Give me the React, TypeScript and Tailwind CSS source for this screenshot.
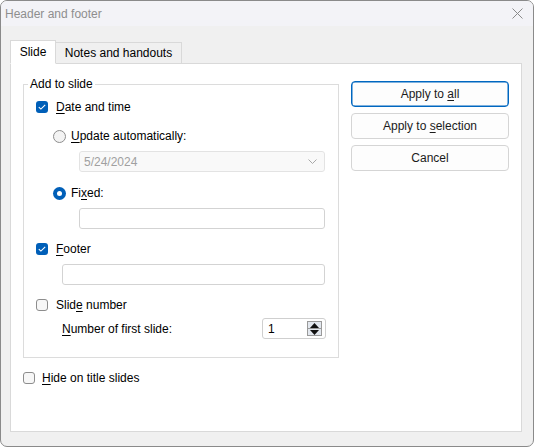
import React from "react";

const font = { fontFamily: '"Segoe UI", "Liberation Sans", Arial, sans-serif' };

function Check({ checked }: { checked?: boolean }) {
  if (checked) {
    return (
      <span className="flex h-[12px] w-[12px] shrink-0 items-center justify-center rounded-[3px] bg-[#005fb8]">
        <svg width="8" height="6" viewBox="0 0 8 6" fill="none">
          <path d="M0.8 3.1 L2.9 5.1 L7.2 0.9" stroke="white" strokeWidth="1.1" />
        </svg>
      </span>
    );
  }
  return <span className="block h-[12px] w-[12px] shrink-0 rounded-[3px] border border-[#8d8d8d] bg-[#f7f7f7]" />;
}

function Radio({ checked }: { checked?: boolean }) {
  if (checked) {
    return (
      <span className="flex h-[13px] w-[13px] shrink-0 items-center justify-center rounded-full bg-[#005fb8]">
        <span className="block h-[5px] w-[5px] rounded-full bg-white" />
      </span>
    );
  }
  return <span className="block h-[13px] w-[13px] shrink-0 rounded-full border border-[#8d8d8d] bg-[#f3f3f3]" />;
}

function Btn({ children, primary }: { children: React.ReactNode; primary?: boolean }) {
  return (
    <div
      className={
        "flex h-[26px] w-[158px] items-center justify-center rounded-[4px] bg-[#fdfdfd] text-[12px] text-[#1b1b1b] " +
        (primary ? "border border-[#0067c0] shadow-[inset_0_0_0_0.5px_#0067c0]" : "border border-[#d5d5d5]")
      }
    >
      {children}
    </div>
  );
}

export default function App() {
  return (
    <div
      style={font}
      className="flex h-[447px] w-[534px] flex-col overflow-hidden rounded-[7px] border border-[#8a8a8a] bg-[#f0f0f0] text-[12px] text-black"
    >
      {/* title bar */}
      <div className="flex h-[25px] shrink-0 items-center justify-between bg-[#f3f3f7] pl-[4px] pr-[10px]">
        <span className="text-[12px] text-[#8e8e8e]">Header and footer</span>
        <svg width="11" height="11" viewBox="0 0 11 11">
          <path d="M0.5 0.5 L10.5 10.5 M10.5 0.5 L0.5 10.5" stroke="#8a8a8a" strokeWidth="1" />
        </svg>
      </div>

      {/* body */}
      <div className="flex flex-1 flex-col px-[9px] pt-[14px]">
        {/* tabs */}
        <div className="relative z-10 -mb-px flex items-end">
          <div className="flex h-[24px] w-[46px] items-center justify-center border border-[#d9d9d9] border-b-white bg-white text-[12px]">
            Slide
          </div>
          <div className="flex h-[22px] w-[126px] items-center justify-center border border-l-0 border-[#d9d9d9] bg-[#f0f0f0] text-[12px]">
            Notes and handouts
          </div>
        </div>

        {/* panel */}
        <div className="flex h-[369px] w-[512px] items-start gap-[12px] border border-[#d9d9d9] bg-white pl-[12px] pt-[17px]">
          {/* left column */}
          <div className="mt-[3px] flex w-[316px] flex-col">
            <div className="relative h-[274px] border border-[#dcdcdc] pl-[12px] pr-[13px]">
              <span className="absolute left-[4px] top-[-9px] bg-white px-[2px] leading-[16px]">Add to slide</span>
              <div className="mt-[14px] flex h-[16px] items-center gap-[8px]">
                <Check checked />
                <span>
                  <u className="underline-offset-2">D</u>ate and time
                </span>
              </div>
              <div className="mt-[13px] flex h-[16px] items-center gap-[5px] pl-[17px]">
                <Radio />
                <span>
                  <u className="underline-offset-2">U</u>pdate automatically:
                </span>
              </div>
              <div className="ml-[43px] mt-[7px] flex h-[21px] items-center justify-between rounded-[3px] border border-[#e3e3e3] bg-[#f9f9f9] pl-[4px] pr-[7px] text-[#a0a0a0]">
                <span>5/24/2024</span>
                <svg width="9" height="5" viewBox="0 0 9 5">
                  <path d="M0.5 0.5 L4.5 4.5 L8.5 0.5" stroke="#a8a8a8" fill="none" strokeWidth="1" />
                </svg>
              </div>
              <div className="mt-[13px] flex h-[16px] items-center gap-[5px] pl-[17px]">
                <Radio checked />
                <span>
                  Fi<u className="underline-offset-2">x</u>ed:
                </span>
              </div>
              <div className="ml-[43px] mt-[7px] h-[21px] rounded-[3px] border border-[#d3d3d3] bg-white" />
              <div className="mt-[12px] flex h-[16px] items-center gap-[8px]">
                <Check checked />
                <span>
                  <u className="underline-offset-2">F</u>ooter
                </span>
              </div>
              <div className="ml-[26px] mt-[7px] h-[21px] rounded-[3px] border border-[#d3d3d3] bg-white" />
              <div className="mt-[12px] flex h-[16px] items-center gap-[8px]">
                <Check />
                <span>
                  Slid<u className="underline-offset-2">e</u> number
                </span>
              </div>
              <div className="mt-[5px] flex h-[21px] items-center justify-between pl-[26px]">
                <span>
                  <u className="underline-offset-2">N</u>umber of first slide:
                </span>
                <div className="-mr-[1px] flex h-[21px] w-[64px] items-center justify-between rounded-[3px] border border-[#cfcfcf] bg-white pl-[5px] pr-[3px]">
                  <span>1</span>
                  <div className="flex h-[15px] w-[15px] flex-col border border-[#9a9a9a] bg-[#e3e8ef]">
                    <div className="flex flex-1 items-center justify-center border-b border-[#9a9a9a]">
                      <svg width="9" height="5" viewBox="0 0 9 5">
                        <path d="M0 5 L4.5 0 L9 5 Z" fill="#111" />
                      </svg>
                    </div>
                    <div className="flex flex-1 items-center justify-center">
                      <svg width="9" height="5" viewBox="0 0 9 5">
                        <path d="M0 0 L4.5 5 L9 0 Z" fill="#111" />
                      </svg>
                    </div>
                  </div>
                </div>
              </div>
            </div>
            <div className="mt-[12px] flex h-[16px] items-center gap-[7px]">
              <Check />
              <span>
                <u className="underline-offset-2">H</u>ide on title slides
              </span>
            </div>
          </div>

          {/* buttons */}
          <div className="flex flex-col gap-[6px]">
            <Btn primary>
              <span>
                Apply to <u className="underline-offset-2">a</u>ll
              </span>
            </Btn>
            <Btn>
              <span>
                Apply to <u className="underline-offset-2">s</u>election
              </span>
            </Btn>
            <Btn>Cancel</Btn>
          </div>
        </div>
      </div>
    </div>
  );
}
